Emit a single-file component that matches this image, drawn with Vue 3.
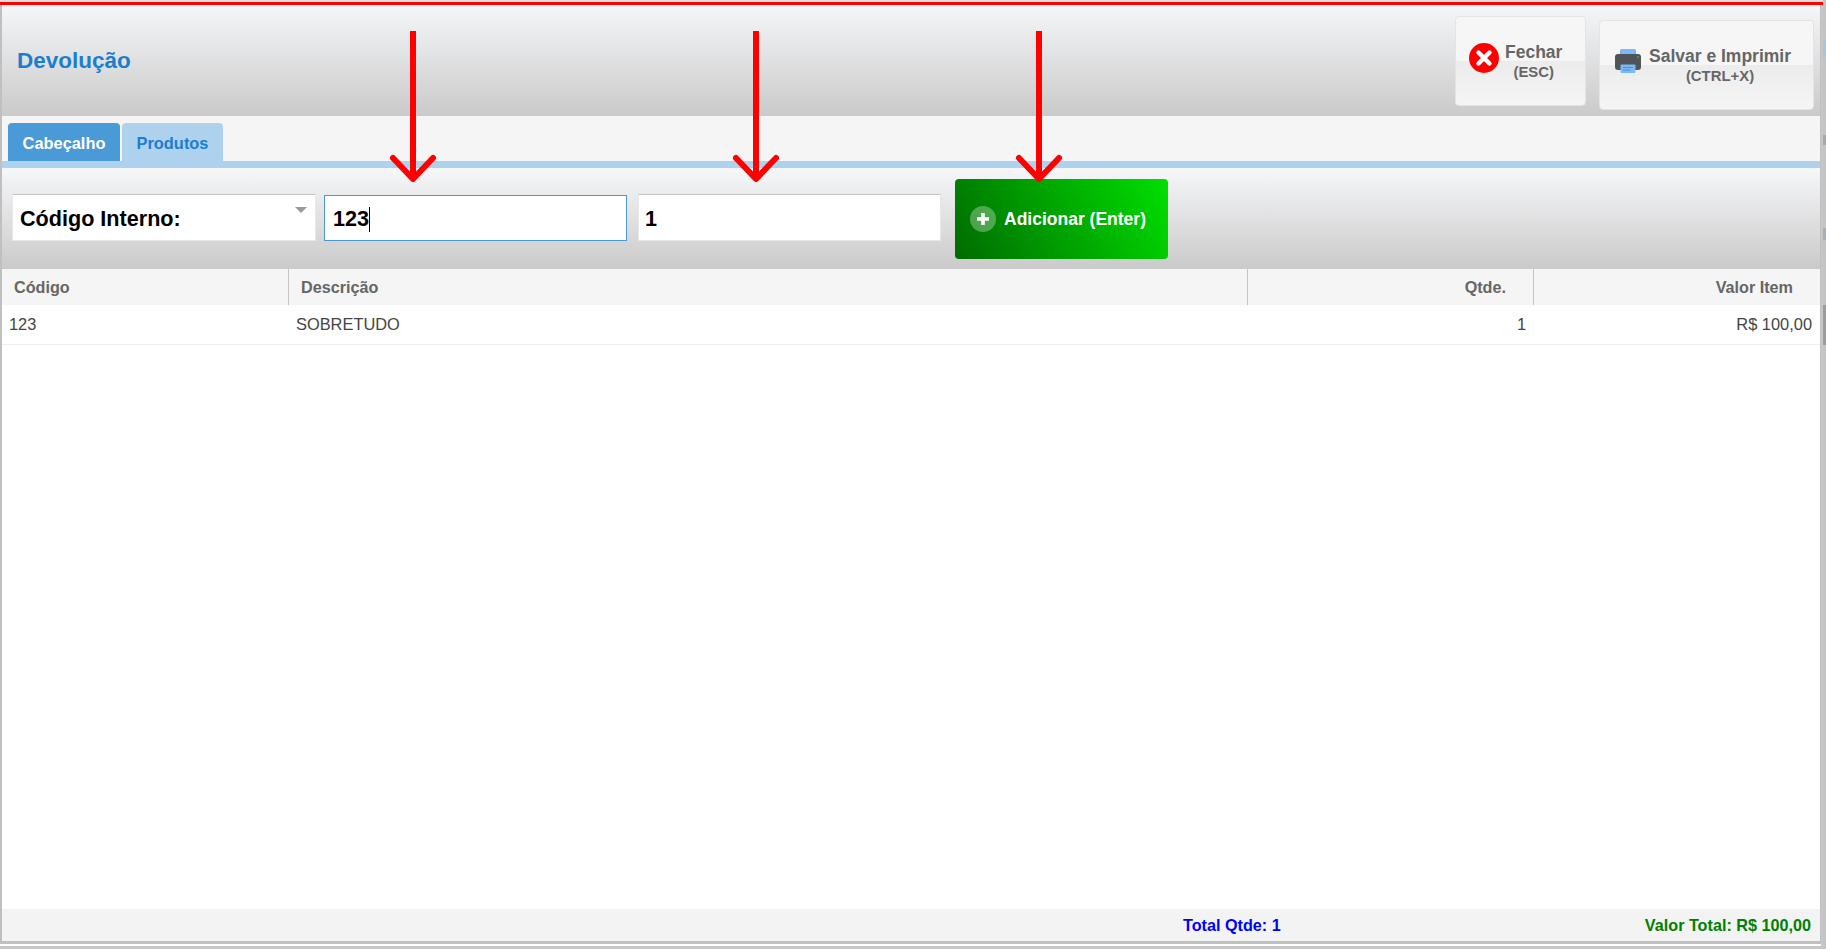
<script setup>
const columns = [
  { label: 'Código', cls: 'c1' },
  { label: 'Descrição', cls: 'c2' },
  { label: 'Qtde.', cls: 'c3' },
  { label: 'Valor Item', cls: 'c4' },
]
const arrows = [413, 756, 1039]
</script>

<template>
  <div class="page">
    <div class="window">
      <header class="head">
        <h1 class="title">Devolução</h1>
        <div class="actions">
          <button class="action fechar">
            <svg class="ic-close" viewBox="0 0 30 30" width="30" height="30">
              <circle cx="15" cy="15" r="15" fill="#f00" />
              <path d="M9.500 9.500 L20.500 20.500 M20.500 9.500 L9.500 20.500" stroke="#fff" stroke-width="4.400" stroke-linecap="round" />
            </svg>
            <span class="lbl"><b>Fechar</b><small>(ESC)</small></span>
          </button>
          <button class="action salvar">
            <svg class="ic-print" viewBox="0 0 26 24" width="26" height="24">
              <path d="M5 1.500 Q5 0 6.500 0 H19.500 Q21 0 21 1.500 V7 H5 Z" fill="#7bb8f5" />
              <path d="M3 5 H23 Q26 5 26 8 V18 Q26 21 23 21 H3 Q0 21 0 18 V8 Q0 5 3 5 Z" fill="#4f5458" />
              <rect x="5.500" y="15.500" width="15" height="8.500" rx="1" fill="#7bb8f5" />
              <path d="M8 18.500 H18 M8 21 H15" stroke="#4a90d9" stroke-width="1.100" />
              <circle cx="23" cy="8" r="0.900" fill="#4caf50" />
            </svg>
            <span class="lbl"><b>Salvar e Imprimir</b><small>(CTRL+X)</small></span>
          </button>
        </div>
      </header>

      <nav class="tabs">
        <a class="tab on">Cabeçalho</a>
        <a class="tab off">Produtos</a>
      </nav>

      <section class="toolbar">
        <div class="field select">
          <span>Código Interno:</span>
          <i class="caret-down"></i>
        </div>
        <div class="field input focus">123<i class="cursor"></i></div>
        <div class="field input qty">1</div>
        <button class="add">
          <span class="plus">
            <svg viewBox="0 0 14 14" width="14" height="14"><path d="M7 1 V13 M1 7 H13" stroke="#fff" stroke-width="3.600" /></svg>
          </span>
          Adicionar (Enter)
        </button>
      </section>

      <div class="thead">
        <div v-for="c in columns" :key="c.label" class="th" :class="c.cls">{{ c.label }}</div>
      </div>
      <div class="tbody">
        <div class="row">
          <div class="td c1">123</div>
          <div class="td c2">SOBRETUDO</div>
          <div class="td c3">1</div>
          <div class="td c4">R$ 100,00</div>
        </div>
      </div>

      <footer class="foot">
        <span class="tq">Total Qtde: 1</span>
        <span class="tv">Valor Total: R$ 100,00</span>
      </footer>
    </div>

    <div class="redline"></div>
    <svg v-for="x in arrows" :key="x" class="arrow" :style="{ left: (x - 24) + 'px' }" viewBox="0 0 48 156" width="48" height="156">
      <path d="M24 0 V146" stroke="#f00" stroke-width="6" fill="none" />
      <path d="M4 127 L24 148 L44 127" stroke="#f00" stroke-width="6" fill="none" stroke-linecap="round" stroke-linejoin="round" />
    </svg>
  </div>
</template>

<style>
html, body { margin: 0; padding: 0; overflow: hidden; }
</style>

<style scoped>
.page {
  position: relative;
  width: 1826px;
  height: 949px;
  overflow: hidden;
  background:
    linear-gradient(#c2c4c8 0 40px, #a9c4dc 40px 57px, #c2c4c8 57px 135px, #a4a9b0 135px 145px, #c2c4c8 145px 228px, #a8aeb6 228px 240px, #c2c4c8 240px 305px, #9c9c9c 305px 345px, #c2c4c8 345px) right top / 3px 100% no-repeat,
    linear-gradient(#dedede, #dedede) left top / 100% 2px no-repeat,
    #c6c6c6;
  font-family: "Liberation Sans", Arial, sans-serif;
  box-sizing: border-box;
  padding: 3px 5px 3px 0;
}
.window {
  height: 941px;
  box-sizing: border-box;
  border-left: 2px solid #c0c0c0;
  border-bottom: 3px solid #c0c0c0;
  border-right: 1px solid #c0c0c0;
  background: #fff;
  display: flex;
  flex-direction: column;
  box-shadow: 0 2px 0 #fff;
}
.head {
  height: 113px;
  flex: none;
  display: flex;
  align-items: center;
  justify-content: space-between;
  background: linear-gradient(#f6f7f9, #cacaca);
}
.title {
  margin: 2px 0 0 15px;
  font-size: 22.500px;
  font-weight: bold;
  color: #1a7fce;
}
.actions { display: flex; align-items: flex-start; gap: 13px; margin-right: 6px; align-self: flex-start; }
.action {
  box-sizing: border-box;
  display: flex;
  align-items: center;
  border: 1px solid #e4e4e4;
  border-radius: 4px;
  padding: 0;
  font-family: inherit;
  color: #666;
}
.fechar {
  margin-top: 13px;
  width: 131px;
  height: 90px;
  padding: 0 0 0 13px;
  background: linear-gradient(#f6f6f6 50%, #ececec 50%, #f5f5f5);
}
.salvar {
  margin-top: 17px;
  width: 215px;
  height: 90px;
  padding: 0 0 0 15px;
  background: linear-gradient(#f6f6f6 50%, #ececec 50%, #f5f5f5);
}
.ic-close { flex: none; margin-top: -6px; }
.ic-print { flex: none; margin-top: -8px; }
.lbl { display: flex; flex-direction: column; align-items: center; margin-top: 1px; margin-left: 6px; }
.salvar .lbl { margin-left: 8px; margin-top: 1px; }
.lbl b { font-size: 17.500px; line-height: 20px; }
.lbl small { font-size: 14.900px; font-weight: bold; line-height: 20px; }

.tabs {
  height: 45px;
  flex: none;
  box-sizing: border-box;
  background: #f5f5f5;
  padding: 7px 0 0 6px;
  display: flex;
  gap: 2px;
}
.tab {
  height: 38px;
  box-sizing: border-box;
  padding-top: 2px;
  border-radius: 4px 4px 0 0;
  font-size: 16.400px;
  font-weight: bold;
  display: flex;
  align-items: center;
  justify-content: center;
}
.on { width: 112px; background: #4a9ad8; color: #fff; }
.off { width: 101px; background: #aed1ee; color: #1a7fce; }

.toolbar {
  flex: none;
  box-sizing: border-box;
  border-top: 7px solid #aed1ee;
  background: linear-gradient(#f6f7f9, #cacaca);
  height: 108px;
  display: flex;
  align-items: flex-start;
  padding: 0 0 0 10px;
  position: relative;
}
.field {
  box-sizing: border-box;
  background: #fff;
  margin-top: 26px;
  height: 47px;
  padding-top: 2px;
  font-size: 21.600px;
  font-weight: bold;
  color: #000;
  display: flex;
  align-items: center;
  border: 1px solid #e8e8e8;
  border-top-color: #c4c4c4;
}
.select { width: 304px; padding-left: 7px; position: relative; }
.caret-down {
  position: absolute;
  right: 8px;
  top: 12px;
  border-left: 6px solid transparent;
  border-right: 6px solid transparent;
  border-top: 6px solid #9a9a9a;
}
.focus {
  width: 303px;
  margin-left: 8px;
  padding-left: 8px;
  margin-top: 27px;
  height: 46px;
  border: 1px solid #4a9ad8;
}
.cursor { display: inline-block; width: 1px; height: 25px; background: #000; }
.qty { width: 303px; margin-left: 11px; padding-left: 6px; }
.add {
  box-sizing: border-box;
  margin: 11px 0 0 14px;
  width: 213px;
  height: 80px;
  border: 0;
  border-radius: 4px;
  background: linear-gradient(60deg, #006b00, #00e000);
  color: #fff;
  font-family: inherit;
  font-size: 17.500px;
  font-weight: bold;
  display: flex;
  align-items: center;
  padding: 0 0 0 15px;
  gap: 8px;
}
.plus {
  width: 26px;
  height: 26px;
  border-radius: 50%;
  background: rgba(255, 255, 255, .3);
  display: flex;
  align-items: center;
  justify-content: center;
}

.thead {
  height: 36px;
  flex: none;
  box-sizing: border-box;
  background: #f5f5f5;
  display: flex;
  font-size: 16.200px;
  font-weight: bold;
  color: #666;
}
.th {
  box-sizing: border-box;
  display: flex;
  align-items: center;
  border-right: 1px solid #c4c4c4;
  padding: 0 12px;
}
.th:last-child { border-right: 0; }
.c1 { width: 287px; flex: none; }
.c2 { width: 959px; flex: none; }
.c3 { width: 286px; flex: none; justify-content: flex-end; text-align: right; }
.c4 { flex: 1; justify-content: flex-end; text-align: right; }
.th.c3 { padding-right: 27px; }
.th.c4 { padding-right: 27px; }
.tbody { flex: 1; background: #fff; }
.row {
  height: 40px;
  box-sizing: border-box;
  display: flex;
  align-items: center;
  border-bottom: 1px solid #efefef;
  font-size: 16.400px;
  color: #444;
}
.td { box-sizing: border-box; padding: 0 8px 0 7px; }
.foot {
  height: 32px;
  flex: none;
  background: #f3f3f3;
  display: flex;
  align-items: center;
  font-size: 16.200px;
  font-weight: bold;
  padding-left: 1181px;
  padding-right: 9px;
  justify-content: space-between;
}
.tq { color: #00f; }
.tv { color: #008000; }

.redline { position: absolute; left: 0; right: 3px; top: 2px; height: 3px; background: #f00; }
.arrow { position: absolute; top: 31px; }
</style>
